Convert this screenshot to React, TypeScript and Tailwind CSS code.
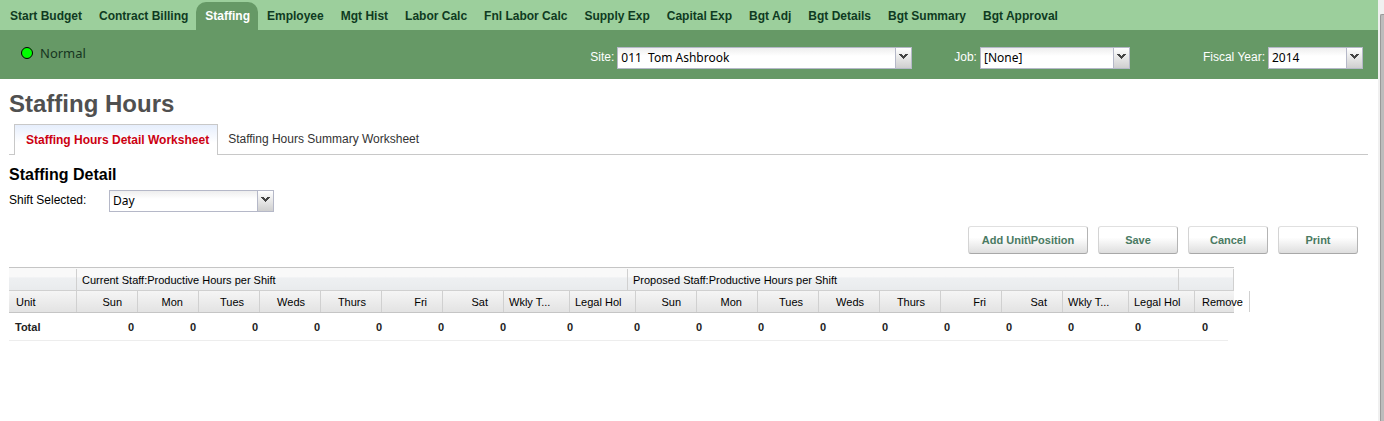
import React from 'react';

const navItems = [
  'Start Budget', 'Contract Billing', 'Staffing', 'Employee', 'Mgt Hist', 'Labor Calc',
  'Fnl Labor Calc', 'Supply Exp', 'Capital Exp', 'Bgt Adj', 'Bgt Details', 'Bgt Summary', 'Bgt Approval',
];

const columns = ['Sun', 'Mon', 'Tues', 'Weds', 'Thurs', 'Fri', 'Sat', 'Wkly T...', 'Legal Hol'];
const allColumns = [...columns, ...columns];

const isWide = (name: string) => name === 'Wkly T...' || name === 'Legal Hol';

type ComboProps = { id: string; value: string; width: string };

function Combo({ id, value, width }: ComboProps) {
  return (
    <div className={`relative h-[22px] ${width}`}>
      <select
        id={id}
        defaultValue={value}
        className="block h-full w-full appearance-none border border-[#b5b8c8] bg-linear-to-b from-[#eeeeee] to-white to-40% pl-[3px] font-['Noto_Sans',sans-serif] text-[12px] leading-5 text-black"
      >
        <option>{value}</option>
      </select>
      <span className="pointer-events-none absolute top-px right-px bottom-px flex w-4 justify-center border-l border-[#b5b8c8] bg-linear-to-b from-white to-[#cfcfcf] pt-[6px]">
        <svg width="9" height="6" viewBox="0 0 9 6" shapeRendering="crispEdges" aria-hidden="true">
          <path d="M0 0h3v1h1v1h1v-1h1v-1h3v1h-1v1h-1v1h-1v1h-1v1h-1v-1h-1v-1h-1v-1h-1v-1h-1z" fill="#444" />
        </svg>
      </span>
    </div>
  );
}

function Field({ id, label, value, width }: ComboProps & { label: string }) {
  return (
    <div className="flex items-start gap-[3px]">
      <label htmlFor={id} className="pt-px text-[12px] leading-[18px] whitespace-nowrap text-white">{label}</label>
      <Combo id={id} value={value} width={width} />
    </div>
  );
}

function PushButton({ label, wide }: { label: string; wide?: boolean }) {
  return (
    <button
      type="button"
      className={`h-7 rounded-[3px] border border-t-[#e0e0e0] border-r-[#b4b4b4] border-b-[#a8a8a8] border-l-[#d4d4d4] bg-linear-to-b from-white from-40% to-[#dedede] text-[11px] font-bold text-[#4a7a62] ${wide ? 'w-[120px]' : 'w-20'}`}
    >
      {label}
    </button>
  );
}

function HoursTable() {
  return (
    <table className="block text-[11px] leading-4 text-black">
      <thead className="block w-[1225px] border-t border-[#c5c5c5]">
        <tr className="flex h-[23px] border-b border-[#d0d0d0] bg-linear-to-b from-[#f9f9f9] from-40% via-[#eef0f2] via-45% to-[#e9ebed] pt-px">
          <th className="w-[68px] border-r border-[#d0d0d0]" aria-label="Unit group" />
          <th className="w-[551px] border-r border-[#d0d0d0] pt-[3px] pl-[5px] text-left font-normal">Current Staff:Productive Hours per Shift</th>
          <th className="w-[551px] border-r border-[#d0d0d0] pt-[3px] pl-[5px] text-left font-normal">Proposed Staff:Productive Hours per Shift</th>
          <th className="w-[55px] border-r border-[#d0d0d0]" aria-label="Actions group" />
        </tr>
        <tr className="flex h-[22px] border-b border-[#c5c5c5] bg-linear-to-b from-[#f5f5f5] to-[#e3e3e3]">
          <th className="w-[68px] shrink-0 border-r border-[#d0d0d0] pt-[3px] pl-[7px] text-left font-normal">Unit</th>
          {allColumns.map((name, i) => (
            <th
              key={i}
              className={`shrink-0 border-r border-[#d0d0d0] pt-[3px] font-normal whitespace-nowrap ${isWide(name) ? 'w-[66px] pl-[5px] text-left' : 'w-[61px] pr-[15px] text-right'}`}
            >
              {name}
            </th>
          ))}
          <th className="w-[55px] shrink-0 border-r border-[#d0d0d0] pt-[3px] pr-[6px] text-right font-normal">Remove</th>
        </tr>
      </thead>
      <tbody className="block w-[1219px]">
        <tr className="flex h-7 border-b border-[#ededed] font-bold text-[#222]">
          <th scope="row" className="w-[68px] shrink-0 pt-[6px] pl-[6px] text-left">Total</th>
          {allColumns.map((name, i) => (
            <td key={i} className={`shrink-0 pt-[6px] pr-[5px] text-right ${isWide(name) ? 'w-[67px]' : 'w-[62px]'}`}>0</td>
          ))}
        </tr>
      </tbody>
    </table>
  );
}

export default function App() {
  return (
    <div className="flex min-h-screen bg-white font-['Liberation_Sans',Arial,sans-serif]">
      <div className="min-w-0 flex-1">
        <nav className="flex h-[30px] items-end bg-[#9ccf9c] pl-px">
          {navItems.map((item) => (
            <a
              key={item}
              href="#"
              className={`h-7 rounded-t-[10px] pt-[6px] pr-[8px] pl-[9px] text-[12px] leading-4 font-bold whitespace-nowrap ${item === 'Staffing' ? 'bg-[#669966] text-white' : 'text-[#0f3b22]'}`}
            >
              {item}
            </a>
          ))}
        </nav>

        <header className="flex h-[49px] items-start bg-[#669966] pr-[15px]">
          <div className="flex items-center gap-[7px] pt-[14px] pl-[21px] font-['Noto_Sans',sans-serif] text-[13px] leading-[18px] text-[#16351f]">
            <span className="size-3 rounded-full border border-black bg-[#00ff00]" />
            Normal
          </div>
          <div className="ml-auto flex pt-[17px]">
            <Field id="site" label="Site:" value={'011\u00a0 Tom Ashbrook'} width="w-[295px]" />
            <div className="ml-[42px]">
              <Field id="job" label="Job:" value="[None]" width="w-[150px]" />
            </div>
            <div className="ml-[73px]">
              <Field id="year" label="Fiscal Year:" value="2014" width="w-[95px]" />
            </div>
          </div>
        </header>

        <main className="pt-[11px] pr-[10px] pl-[9px]">
          <h1 className="text-[24px] leading-7 font-bold text-[#505050]">Staffing Hours</h1>

          <div className="mt-[6px] flex border-b border-[#c8c8c8] pl-[5px]">
            <a href="#" className="-mb-px h-[31px] border border-b-0 border-[#c8c8c8] bg-linear-to-b from-[#e6eefc] to-white to-60% pt-[7px] pr-[8px] pl-[11px] text-[12px] leading-4 font-bold text-[#cc0011]">
              Staffing Hours Detail Worksheet
            </a>
            <a href="#" className="px-[10px] pt-[7px] text-[12px] leading-4 text-[#333]">Staffing Hours Summary Worksheet</a>
          </div>

          <h2 className="mt-[10px] text-[16px] leading-5 font-bold text-black">Staffing Detail</h2>

          <div className="mt-[5px] flex items-start">
            <label htmlFor="shift" className="w-[100px] pt-px text-[12px] leading-[18px] text-black">Shift Selected:</label>
            <Combo id="shift" value="Day" width="w-[165px]" />
          </div>

          <div className="mt-[14px] mb-[13px] flex justify-end gap-[10px] pr-[10px]">
            <PushButton label="Add Unit\Position" wide />
            <PushButton label="Save" />
            <PushButton label="Cancel" />
            <PushButton label="Print" />
          </div>

          <HoursTable />
        </main>
      </div>

      <div className="flex w-[6px] flex-col bg-[#f0f0f0] pt-[14px] pl-[2px]" aria-hidden="true">
        <div className="flex-1 rounded-tl-[2px] border-t border-l border-[#999] bg-[#bcbcbc]" />
      </div>
    </div>
  );
}
